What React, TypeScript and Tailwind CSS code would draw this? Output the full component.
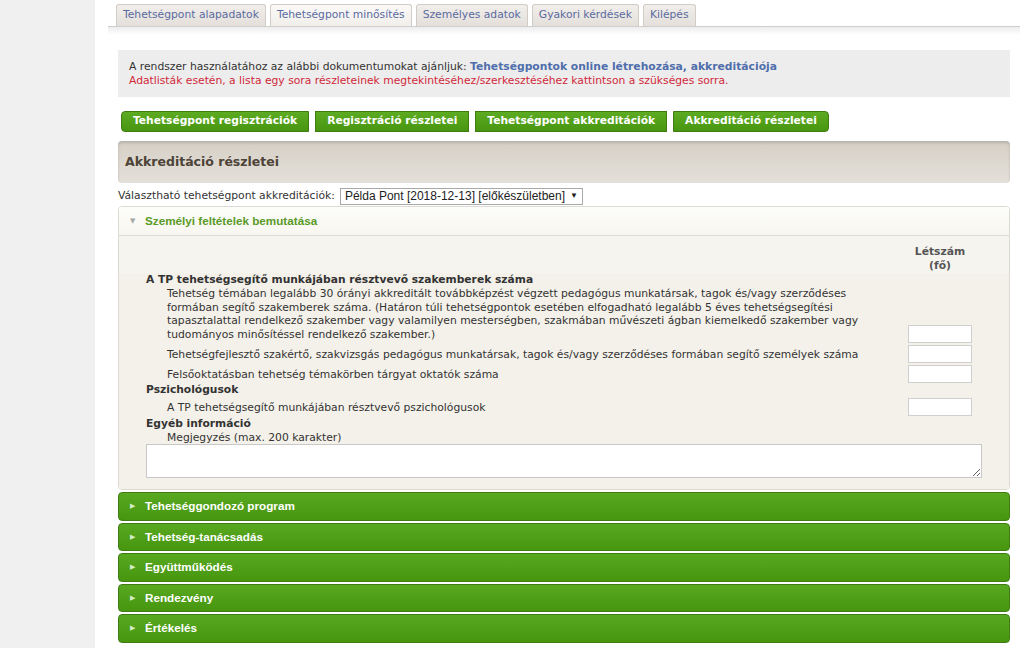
const tabs = [
  { label: 'Tehetségpont alapadatok', active: false },
  { label: 'Tehetségpont minősítés', active: true },
  { label: 'Személyes adatok', active: false },
  { label: 'Gyakori kérdések', active: false },
  { label: 'Kilépés', active: false },
];

const subButtons = [
  'Tehetségpont regisztrációk',
  'Regisztráció részletei',
  'Tehetségpont akkreditációk',
  'Akkreditáció részletei',
];

const closedSections = [
  'Tehetséggondozó program',
  'Tehetség-tanácsadás',
  'Együttműködés',
  'Rendezvény',
  'Értékelés',
];

function NumInput() {
  return <input type="text" className="block h-[18px] w-[64px] border border-[#cfcfcf] bg-white outline-none" />;
}

function Row({ text, input }: { text: React.ReactNode; input?: boolean }) {
  return (
    <div className="flex items-end">
      <div className="flex-1 pl-[21px] pr-[30px] pb-[2px] leading-[13.5px]">{text}</div>
      <div className="w-[101px] shrink-0">{input && <NumInput />}</div>
    </div>
  );
}

export default function App() {
  return (
    <div className="flex min-h-[648px] bg-white text-[#333] font-['DejaVu_Sans',Verdana,sans-serif] text-[10.75px]">
      <aside className="w-[95px] shrink-0 bg-[#f0f0f0]" />
      <main className="ml-[13px] w-[912px]">
        {/* Tabs */}
        <div className="pt-[4px]">
          <div className="flex gap-[4px] pl-[8px] border-b border-[#cfcfcf]">
            {tabs.map((t) => (
              <div
                key={t.label}
                className={`h-[22px] px-[6px] flex items-center border border-b-0 border-[#d2ccc6] rounded-t-[3px] text-[#5b6ba0] ${
                  t.active
                    ? 'bg-gradient-to-b from-[#fbfaf8] to-[#f1eeea]'
                    : 'bg-gradient-to-b from-[#f1eeeb] to-[#e4dfda]'
                }`}
              >
                {t.label}
              </div>
            ))}
          </div>
          <div className="h-[8px] bg-gradient-to-b from-[#ededed] to-white" />
        </div>

        {/* Info box */}
        <div className="mt-[15px] mx-[10px] bg-[#ededed] px-[11px] pt-[10px] pb-[9px] leading-[14px]">
          <div>
            A rendszer használatához az alábbi dokumentumokat ajánljuk:{' '}
            <span className="font-bold text-[#4f6eab]">Tehetségpontok online létrehozása, akkreditációja</span>
          </div>
          <div className="text-[#d0283a]">
            Adatlisták esetén, a lista egy sora részleteinek megtekintéséhez/szerkesztéséhez kattintson a szükséges sorra.
          </div>
        </div>

        {/* Sub buttons */}
        <div className="mt-[14px] ml-[13px] flex gap-[6px]">
          {subButtons.map((b, i) => (
            <div
              key={b}
              className={`h-[21px] px-[11px] flex items-center border border-[#3e7c12] bg-gradient-to-b from-[#5cab22] to-[#48960f] text-white font-bold text-[10.7px] ${
                i === 0 ? 'rounded-l-[4px]' : ''
              } ${i === subButtons.length - 1 ? 'rounded-r-[4px]' : ''}`}
            >
              {b}
            </div>
          ))}
        </div>

        {/* Title panel */}
        <div className="mt-[9px] mx-[10px] h-[42px] rounded-[4px] bg-gradient-to-b from-[#d6d0c6] to-[#e4e0d9] shadow-[inset_0_2px_3px_rgba(0,0,0,0.15)] flex items-center px-[7px]">
          <span className="font-bold text-[12.5px] text-[#4d4338]">Akkreditáció részletei</span>
        </div>

        {/* Select */}
        <div className="mt-[3px] ml-[10px] flex items-center h-[20px]">
          <span>Választható tehetségpont akkreditációk:</span>
          <div className="ml-[5px] h-[17px] border border-[#a9a9a9] bg-white flex items-center px-[4px] gap-[5px] font-['Liberation_Sans',Arial,sans-serif] text-[12px] text-[#222]">
            <span>Példa Pont [2018-12-13] [előkészületben]</span>
            <span className="text-[8px]">▼</span>
          </div>
        </div>

        {/* Open section */}
        <div className="mx-[10px] border border-[#dcdad2] rounded-[4px] overflow-hidden">
          <div className="h-[29px] flex items-center pl-[11px] bg-gradient-to-b from-[#fdfdfb] to-[#f7f6ef] border-b border-[#dcdad2]">
            <span className="text-[#a8a8a8] text-[7px] w-[15px]">▼</span>
            <span className="font-bold text-[#5a9a28] text-[11.7px] font-['Liberation_Sans',Arial,sans-serif]">
              Személyi feltételek bemutatása
            </span>
          </div>
          <div className="bg-[#f4f1ea] pl-[27px] pb-[11px]">
            <div className="bg-[#f6f4ee] -ml-[27px] pl-[27px] pt-[9px] flex">
              <div className="flex-1" />
              <div className="w-[101px] shrink-0">
                <div className="w-[64px] text-center font-bold text-[#555] leading-[14px]">
                  Létszám
                  <br />
                  (fő)
                </div>
              </div>
            </div>
            <div className="font-bold text-[10.7px] leading-[14px]">A TP tehetségsegítő munkájában résztvevő szakemberek száma</div>
            <Row
              input
              text={
                <>
                  Tehetség témában legalább 30 órányi akkreditált továbbképzést végzett pedagógus munkatársak, tagok és/vagy
                  szerződéses formában segítő szakemberek száma. (Határon túli tehetségpontok esetében elfogadható legalább 5
                  éves tehetségsegítési tapasztalattal rendelkező szakember vagy valamilyen mesterségben, szakmában művészeti
                  ágban kiemelkedő szakember vagy tudományos minősítéssel rendelkező szakember.)
                </>
              }
            />
            <div className="mt-[2px]">
              <Row input text="Tehetségfejlesztő szakértő, szakvizsgás pedagógus munkatársak, tagok és/vagy szerződéses formában segítő személyek száma" />
            </div>
            <div className="mt-[2px]">
              <Row input text="Felsőoktatásban tehetség témakörben tárgyat oktatók száma" />
            </div>
            <div className="font-bold text-[10.7px] leading-[14px]">Pszichológusok</div>
            <div className="mt-[1px]">
              <Row input text="A TP tehetségsegítő munkájában résztvevő pszichológusok" />
            </div>
            <div className="font-bold text-[10.7px] leading-[14px] mt-[1px]">Egyéb információ</div>
            <div className="pl-[21px] leading-[13px]">Megjegyzés (max. 200 karakter)</div>
            <textarea className="block w-[836px] h-[34px] border border-[#c8c8c8] bg-white outline-none resize-y" />
          </div>
        </div>

        {/* Closed sections */}
        <div className="mt-[2px] mx-[10px] flex flex-col gap-[2px]">
          {closedSections.map((s) => (
            <div
              key={s}
              className="h-[28.5px] flex items-center pl-[11px] rounded-[4px] border border-[#3f7d14] bg-gradient-to-b from-[#58a820] to-[#47960e] text-white"
            >
              <span className="text-[7px] w-[15px] text-[#d6ecc4]">▶</span>
              <span className="font-bold text-[11.7px] font-['Liberation_Sans',Arial,sans-serif]">{s}</span>
            </div>
          ))}
        </div>
      </main>
    </div>
  );
}
